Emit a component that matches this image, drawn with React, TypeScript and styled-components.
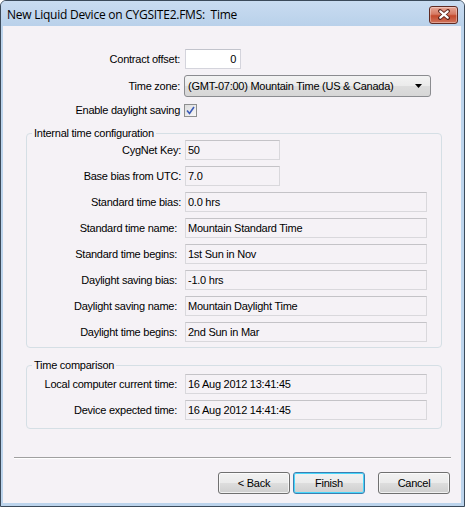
import React from "react";
import styled, { createGlobalStyle } from "styled-components";

const Global = createGlobalStyle`
  html, body { margin: 0; padding: 0; background: #ffffff; }
  body { width: 465px; height: 507px; overflow: hidden; }
  * { box-sizing: border-box; }
`;

const Window = styled.div`
  width: 465px;
  height: 507px;
  display: flex;
  flex-direction: column;
  border: 1px solid #3b4a5a;
  border-radius: 6px 6px 0 0;
  background: #bcd4ec;
  padding: 0 3px 3px 2px;
  font-family: "Liberation Sans", Arial, sans-serif;
  font-size: 11px;
  letter-spacing: -0.25px;
  color: #000;
`;

const TitleBar = styled.div`
  height: 25px;
  display: flex;
  align-items: center;
  justify-content: space-between;
  margin: 0 -3px 0 -2px;
  padding: 0 6px 0 6px;
  border-radius: 5px 5px 0 0;
  background: linear-gradient(#c9dcf1, #b9d1ea);
`;

const Title = styled.span`
  font-family: "Open Sans", "Noto Sans", sans-serif;
  font-size: 12px;
  letter-spacing: -0.25px;
  color: #000;
  white-space: pre;
  padding-top: 1px;
`;

const CloseButton = styled.div`
  width: 29px;
  height: 18px;
  margin-top: 2px;
  border: 1px solid #5f2a22;
  border-radius: 3px;
  background: linear-gradient(#e6a797 0%, #d67a63 45%, #c3492c 55%, #d0745c 100%);
  display: flex;
  align-items: center;
  justify-content: center;
  box-shadow: inset 0 0 0 1px rgba(255, 255, 255, 0.35);
`;

const Client = styled.div`
  flex: 1;
  background: #f5f2f6;
  display: flex;
  flex-direction: column;
  padding-top: 23px;
`;

const TopForm = styled.div`
  display: grid;
  grid-template-columns: 177px auto;
  column-gap: 4px;
  row-gap: 6px;
  align-items: center;
  justify-items: start;
`;

const Label = styled.span<{ $inset?: number }>`
  justify-self: end;
  white-space: nowrap;
  padding-right: ${(p) => p.$inset ?? 0}px;
  line-height: 13px;
`;

const NumberInput = styled.div`
  width: 56px;
  height: 20px;
  margin-left: 1px;
  background: #ffffff;
  border: 1px solid #d4d4dc;
  border-top-color: #c2c4cc;
  display: flex;
  align-items: center;
  justify-content: flex-end;
  padding-right: 4px;
`;

const Combo = styled.div`
  width: 247px;
  height: 22px;
  border: 1px solid #8b8c90;
  border-radius: 3px;
  background: linear-gradient(#f3f3f3 0%, #ebebeb 48%, #dddddd 52%, #d6d6d6 100%);
  display: flex;
  align-items: center;
  justify-content: space-between;
  padding: 0 7px 0 3px;
`;

const CheckRow = styled.div`
  margin-top: 1px;
  display: flex;
  align-items: center;
`;

const CheckBox = styled.div`
  width: 13px;
  height: 13px;
  border: 1px solid #8e8f8f;
  background: linear-gradient(135deg, #dcdcdc, #f8f8f8);
  display: flex;
  align-items: center;
  justify-content: center;
`;

const Group = styled.fieldset<{ $top: number; $pt: number; $pb: number }>`
  margin: ${(p) => p.$top}px 19px 0 23px;
  padding: ${(p) => p.$pt}px 14px ${(p) => p.$pb}px 0;
  border: 1px solid #d5dfe5;
  border-radius: 4px;
  display: grid;
  grid-template-columns: 154px auto;
  column-gap: 4px;
  row-gap: 6px;
  align-items: center;
  justify-items: start;
`;

const Legend = styled.legend`
  margin-left: 5px;
  padding: 0 2px;
  line-height: 13px;
  font-size: 11px;
`;

const Field = styled.div<{ $wide?: boolean }>`
  width: ${(p) => (p.$wide ? "242px" : "95px")};
  height: 20px;
  border: 1px solid #d9d8dc;
  border-top-color: #c4c3c7;
  background: #f5f2f6;
  display: flex;
  align-items: center;
  padding-left: 2px;
  white-space: nowrap;
`;

const Separator = styled.div`
  margin: 28px 10px 0 11px;
  height: 2px;
  border-top: 1px solid #a0a0a0;
  border-bottom: 1px solid #ffffff;
`;

const ButtonRow = styled.div`
  display: flex;
  justify-content: flex-end;
  margin-top: 13px;
  padding-right: 11px;
`;

const Button = styled.div<{ $focus?: boolean; $gap?: number }>`
  width: 72px;
  height: 22px;
  margin-left: ${(p) => p.$gap ?? 0}px;
  border: 1px solid ${(p) => (p.$focus ? "#3c7fb1" : "#707070")};
  border-radius: 3px;
  background: linear-gradient(#f2f2f2 0%, #ebebeb 48%, #dddddd 52%, #cfcfcf 100%);
  box-shadow: inset 0 0 0 1px ${(p) => (p.$focus ? "#48d7fb" : "rgba(255,255,255,0.7)")};
  display: flex;
  align-items: center;
  justify-content: center;
`;

const wideRows: [string, string, number][] = [
  ["Standard time bias:", "0.0 hrs", 0],
  ["Standard time name:", "Mountain Standard Time", 4],
  ["Standard time begins:", "1st Sun in Nov", 4],
  ["Daylight saving bias:", "-1.0 hrs", 4],
  ["Daylight saving name:", "Mountain Daylight Time", 4],
  ["Daylight time begins:", "2nd Sun in Mar", 4],
];

export default function App() {
  return (
    <>
      <Global />
      <Window>
        <TitleBar>
          <Title>New Liquid Device on CYGSITE2.FMS:  Time</Title>
          <CloseButton>
            <svg width="14" height="11" viewBox="0 0 14 11">
              <path
                d="M3 2 L11 9 M11 2 L3 9"
                stroke="#5a2018"
                strokeWidth="3.8"
                strokeLinecap="round"
                fill="none"
              />
              <path
                d="M3.3 2.3 L10.7 8.7 M10.7 2.3 L3.3 8.7"
                stroke="#ffffff"
                strokeWidth="2.2"
                strokeLinecap="round"
                fill="none"
              />
            </svg>
          </CloseButton>
        </TitleBar>
        <Client>
          <TopForm>
            <Label>Contract offset:</Label>
            <NumberInput>0</NumberInput>
            <Label>Time zone:</Label>
            <Combo>
              <span>(GMT-07:00) Mountain Time (US &amp; Canada)</span>
              <svg width="8" height="5" viewBox="0 0 8 5">
                <path d="M0 0 H7 L3.5 4 Z" fill="#000" />
              </svg>
            </Combo>
            <Label>Enable daylight saving</Label>
            <CheckRow>
              <CheckBox>
                <svg width="9" height="9" viewBox="0 0 9 9">
                  <path d="M1 4.5 L3.5 7.5 L8 1" stroke="#3a5ab8" strokeWidth="1.6" fill="none" />
                </svg>
              </CheckBox>
            </CheckRow>
          </TopForm>

          <Group $top={10} $pt={0} $pb={5}>
            <Legend>Internal time configuration</Legend>
            <Label>CygNet Key:</Label>
            <Field>50</Field>
            <Label>Base bias from UTC:</Label>
            <Field>7.0</Field>
            {wideRows.map(([l, v, inset]) => (
              <React.Fragment key={l}>
                <Label $inset={inset}>{l}</Label>
                <Field $wide>{v}</Field>
              </React.Fragment>
            ))}
          </Group>

          <Group $top={11} $pt={2} $pb={8}>
            <Legend>Time comparison</Legend>
            <Label $inset={4}>Local computer current time:</Label>
            <Field $wide>16 Aug 2012 13:41:45</Field>
            <Label $inset={4}>Device expected time:</Label>
            <Field $wide>16 Aug 2012 14:41:45</Field>
          </Group>

          <Separator />
          <ButtonRow>
            <Button>&lt; Back</Button>
            <Button $focus $gap={3}>Finish</Button>
            <Button $gap={13}>Cancel</Button>
          </ButtonRow>
        </Client>
      </Window>
    </>
  );
}
